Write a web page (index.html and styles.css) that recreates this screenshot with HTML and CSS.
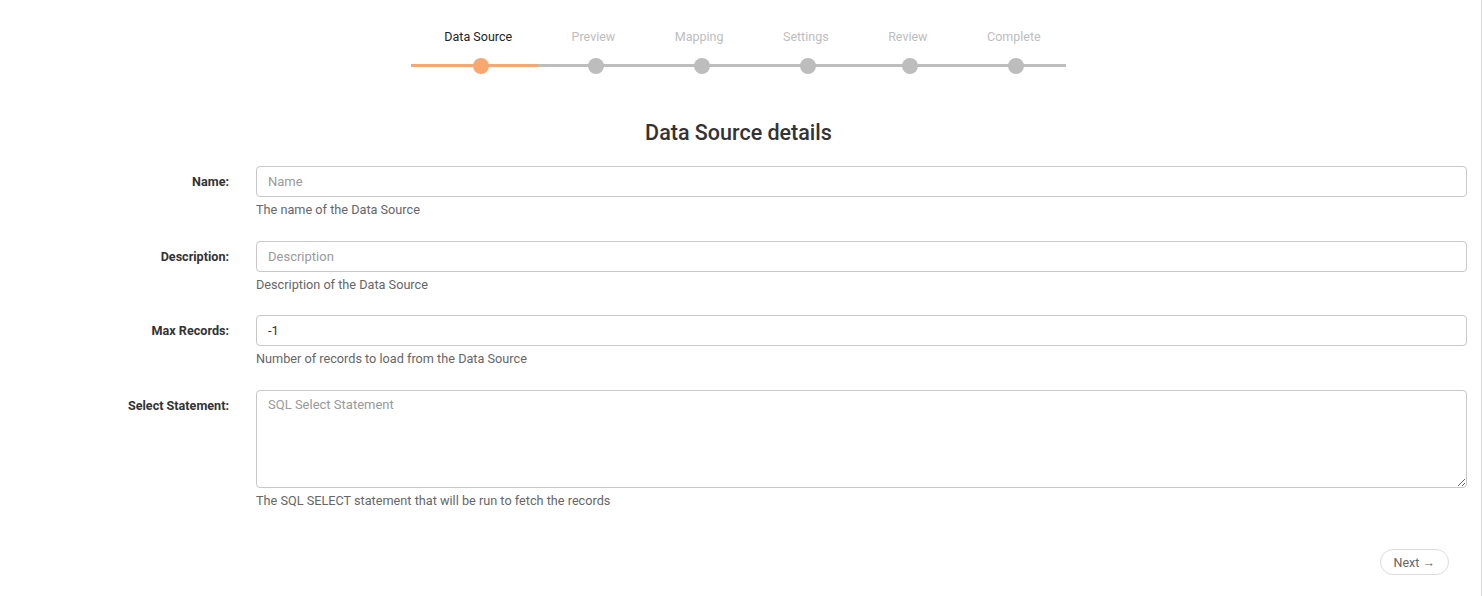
FILE: index.html
```html
<!DOCTYPE html>
<html>
<head>
<meta charset="utf-8">
<link rel="stylesheet" href="styles.css">
</head>
<body>
<div class="page">
  <div class="stepper">
    <div class="step done">
      <div class="step-label">Data Source</div>
      <div class="rail"><span class="dot"></span></div>
    </div>
    <div class="step">
      <div class="step-label">Preview</div>
      <div class="rail"><span class="dot"></span></div>
    </div>
    <div class="step">
      <div class="step-label">Mapping</div>
      <div class="rail"><span class="dot"></span></div>
    </div>
    <div class="step">
      <div class="step-label">Settings</div>
      <div class="rail"><span class="dot"></span></div>
    </div>
    <div class="step">
      <div class="step-label">Review</div>
      <div class="rail"><span class="dot"></span></div>
    </div>
    <div class="step">
      <div class="step-label">Complete</div>
      <div class="rail"><span class="dot"></span></div>
    </div>
  </div>

  <h2 class="title">Data Source details</h2>

  <form class="form">
    <div class="row">
      <label class="label">Name:</label>
      <div class="field">
        <input class="input" type="text" placeholder="Name">
        <div class="help">The name of the Data Source</div>
      </div>
    </div>
    <div class="row">
      <label class="label">Description:</label>
      <div class="field">
        <input class="input" type="text" placeholder="Description">
        <div class="help">Description of the Data Source</div>
      </div>
    </div>
    <div class="row">
      <label class="label">Max Records:</label>
      <div class="field">
        <input class="input" type="text" value="-1">
        <div class="help">Number of records to load from the Data Source</div>
      </div>
    </div>
    <div class="row">
      <label class="label">Select Statement:</label>
      <div class="field">
        <textarea class="input textarea" placeholder="SQL Select Statement"></textarea>
        <div class="help">The SQL SELECT statement that will be run to fetch the records</div>
      </div>
    </div>
  </form>

  <div class="actions">
    <button class="btn-next" type="button">Next →</button>
  </div>
</div>
</body>
</html>
```

FILE: styles.css
```css
* { box-sizing: border-box; }
html, body {
  margin: 0;
  padding: 0;
  background: #fff;
}
body {
  font-family: Roboto, "Liberation Sans", Arial, sans-serif;
  font-size: 13px;
  color: #333;
}
.page {
  width: 1482px;
  height: 596px;
  border-right: 1px solid #d8d8d8;
  padding-top: 29px;
  overflow: hidden;
}
.stepper {
  display: flex;
  justify-content: center;
  padding-right: 4px;
}
.step {
  display: flex;
  flex-direction: column;
  align-items: center;
}
.step-label {
  padding: 0 25.75px 0 33.75px;
  font-size: 12.5px;
  line-height: 16px;
  color: #bdbdbd;
  white-space: nowrap;
}
.step.done .step-label { color: #222; }
.rail {
  align-self: stretch;
  height: 16px;
  margin-top: 13px;
  display: flex;
  justify-content: center;
  background: linear-gradient(#bdbdbd, #bdbdbd) 0 6px / 100% 3px no-repeat;
}
.step.done .rail {
  background: linear-gradient(#f7a872, #f7a872) 0 6px / 100% 3px no-repeat;
}
.dot {
  width: 16px;
  height: 16px;
  border-radius: 50%;
  background: #bdbdbd;
  margin-left: 13px;
}
.step.done .dot { background: #f7a872; }

.title {
  margin: 46px 0 0;
  padding-right: 4px;
  text-align: center;
  font-size: 21.5px;
  font-weight: 500;
  line-height: 26px;
  color: #333;
}
.form {
  margin-top: 20px;
  display: flex;
  flex-direction: column;
  gap: 22.7px;
}
.row {
  display: grid;
  grid-template-columns: 229px 1211px;
  column-gap: 27px;
}
.label {
  text-align: right;
  font-weight: 700;
  font-size: 12.6px;
  line-height: 31px;
  color: #333;
}
.field {
  display: flex;
  flex-direction: column;
}
.input {
  display: block;
  width: 100%;
  height: 31px;
  border: 1px solid #c8c8c8;
  border-radius: 4px;
  padding: 0 11px;
  font-family: inherit;
  font-size: 13px;
  color: #333;
  background: #fff;
  outline: none;
}
.input::placeholder { color: #9a9a9a; }
.textarea {
  height: 98px;
  padding: 6px 11px;
  line-height: 16px;
  resize: vertical;
}
.help {
  margin-top: 5px;
  font-size: 12.7px;
  line-height: 16px;
  color: #666;
}
.actions {
  display: flex;
  justify-content: flex-end;
  padding-right: 32px;
  margin-top: 40px;
}
.btn-next {
  height: 26px;
  padding: 0 13px;
  border: 1px solid #dcdcdc;
  border-radius: 13px;
  background: #fff;
  font-family: inherit;
  font-size: 12.5px;
  color: #666;
  cursor: pointer;
}
```
